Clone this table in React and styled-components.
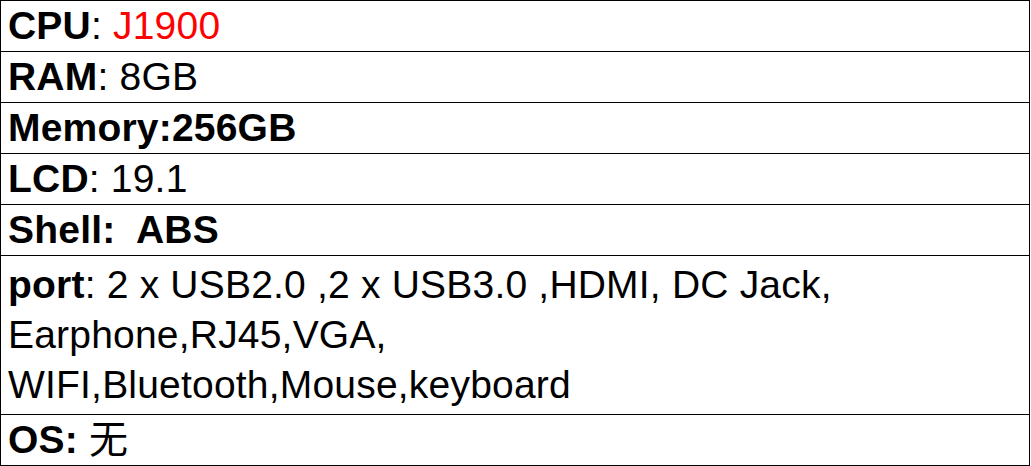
import React from "react";
import styled, { createGlobalStyle } from "styled-components";

const GlobalStyle = createGlobalStyle`
  html, body {
    margin: 0;
    padding: 0;
    background: #ffffff;
  }
`;

const specs = [
  { label: "CPU", sep: ": ", value: "J1900", red: true },
  { label: "RAM", sep: ": ", value: "8GB" },
  { label: "Memory:256GB", sep: "", value: "" },
  { label: "LCD", sep: ": ", value: "19.1" },
  { label: "Shell:  ABS", sep: "", value: "" },
];

const portLines = [
  "2 x USB2.0 ,2 x USB3.0 ,HDMI, DC Jack,",
  "Earphone,RJ45,VGA,",
  "WIFI,Bluetooth,Mouse,keyboard",
];

const App = () => {
  return (
    <>
      <GlobalStyle />
      <SpecTable>
        {specs.map((s) => (
          <Row key={s.label}>
            <Label>{s.label}</Label>
            {s.sep}
            {s.value && <Value $red={s.red}>{s.value}</Value>}
          </Row>
        ))}
        <Row $tall>
          <Label>port</Label>: {portLines[0]}
          <br />
          {portLines[1]}
          <br />
          {portLines[2]}
        </Row>
        <Row>
          <Label>OS:</Label> 无
        </Row>
      </SpecTable>
    </>
  );
};

const SpecTable = styled.div`
  width: 1030px;
  box-sizing: border-box;
  border: 1px solid #000;
  border-bottom: none;
  display: flex;
  flex-direction: column;
  font-family: "Liberation Sans", Arial, "Noto Sans CJK SC", sans-serif;
  font-size: 39px;
  letter-spacing: 0.2px;
  color: #000;
`;

const Row = styled.div`
  border-bottom: 1px solid #000;
  padding: ${(p) => (p.$tall ? "4px 7px" : "0 7px")};
  line-height: 50px;
  white-space: pre;
`;

const Label = styled.span`
  font-weight: bold;
`;

const Value = styled.span`
  color: ${(p) => (p.$red ? "#ff0000" : "#000")};
`;

export default App;
